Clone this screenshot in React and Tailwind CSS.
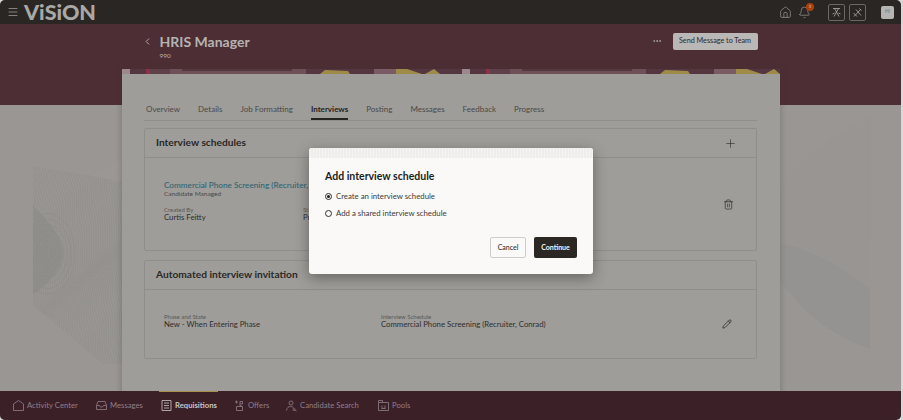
import { Bell, ChevronLeft, Ellipsis, House, Menu, Pencil, Plus, Trash2 } from "lucide-react";

// wavy contour lines for the page backdrop
function contourPath(x0, i) {
  let d = `M${x0} 140`;
  for (let y = 144; y <= 400; y += 4) {
    const x =
      x0 +
      Math.sin(y / 34 + i * 0.05) * 9 +
      Math.sin(y / 15 + i * 0.13) * 2.5 +
      Math.sin(y / 7 + i * 0.31) * 0.8;
    d += ` L${x.toFixed(1)} ${y}`;
  }
  return d;
}

function Backdrop() {
  const lines = Array.from({ length: 60 }, (_, i) => i);
  const rings = [5, 9, 13, 17, 21, 25, 29];
  return (
    <svg className="absolute inset-0 h-full w-full" viewBox="0 0 901 396">
      <defs>
        <clipPath id="leftTopo">
          <polygon points="0,154 60,163 122,176 122,367 75,367 0,303" />
        </clipPath>
      </defs>
      <polygon points="60,166 122,128 122,176" fill="#9b9794" />
      <path d="M0 196 Q30 225 33 245 Q32 270 0 292Z" fill="#918f8c" />
      <path d="M787 236 Q800 146 903 101 V367 H787Z" fill="#989593" />
      <path d="M783 233 Q840 236 903 286 V351 Q830 326 790 251Z" fill="#959391" />
      <path d="M790 251 Q830 326 903 351 V367 H783 V233Z" fill="#9a9693" />
      <g clipPath="url(#leftTopo)" fill="none" stroke="#8d8c89" strokeWidth="0.55">
        {lines.map((i) => (
          <path key={i} d={contourPath(i * 2.4 - 10, i)} />
        ))}
        {rings.map((r) => (
          <ellipse key={r} cx="16" cy="248" rx={r} ry={r * 1.5} />
        ))}
      </g>
    </svg>
  );
}

function BannerStrip() {
  return (
    <svg className="block h-[5px] w-full" viewBox="0 0 658 5" preserveAspectRatio="none">
      <defs>
        <pattern id="strip" x="0" y="0" width="340" height="5" patternUnits="userSpaceOnUse">
          <rect width="340" height="5" fill="#543640" />
          <rect x="0" width="8" height="5" fill="#9c888d" />
          <rect x="24" width="4" height="5" fill="#8d3349" />
          <rect x="28" width="20" height="5" fill="#5e404a" />
          <rect x="48" width="136" height="5" fill="#6f5058" />
          <rect x="60" width="110" height="2" fill="#52393f" />
          <polygon points="198,5 203,1 226,2 228,5" fill="#a08a47" />
          <rect x="252" width="22" height="5" fill="#7a5b64" />
          <polygon points="274,0 285,0 300,5 274,5" fill="#a08a47" />
          <polygon points="303,5 312,0 318,5" fill="#a08a47" />
        </pattern>
      </defs>
      <rect width="658" height="5" fill="url(#strip)" />
    </svg>
  );
}

function Field({ label, value, className = "" }) {
  return (
    <div className={className}>
      <div className="text-[6px] leading-[7px] text-[#5a5855]">{label}</div>
      <div className="text-[7.75px] leading-[9px] text-[#2f2d2b]">{value}</div>
    </div>
  );
}

function Card({ title, action, children, className = "" }) {
  return (
    <section className={`rounded-[2px] border border-[#8f8e8b] ${className}`}>
      <div className="flex h-[29px] items-center justify-between border-b border-[#8f8e8b] pl-[11px] pr-[19px]">
        <h2 className="text-[10.2px] font-bold text-[#2a2826]">{title}</h2>
        {action}
      </div>
      {children}
    </section>
  );
}

function NavIcon({ children }) {
  return (
    <svg width="13" height="13" viewBox="0 0 13 13" fill="none" stroke="currentColor" strokeWidth="0.8">
      {children}
    </svg>
  );
}

const tabs = ["Overview", "Details", "Job Formatting", "Interviews", "Posting", "Messages", "Feedback", "Progress"];

const navItems = [
  {
    label: "Activity Center",
    width: "w-[83px]",
    icon: <path d="M1.5 11.5V5L6.5 1.5 11.5 5v6.5Z" stroke="#8f7f92" />,
  },
  {
    label: "Messages",
    width: "w-[65px]",
    icon: <path d="M1.5 6.5 3 2.5h7l1.500 4v4h-10Zm0 0h3l1 1.500h2l1-1.500h3" />,
  },
  {
    label: "Requisitions",
    width: "w-[73px]",
    active: true,
    icon: <path d="M2 1.500h9v10H2Zm2 2.500h5M4 6.500h5M4 9h5" />,
  },
  {
    label: "Offers",
    width: "w-[52px]",
    icon: <path d="M2 3h3M3.500 1.500v3M7 2.500h2.500v2.500H7ZM3.500 7.500h6v4h-6ZM6 5.500l3 2" />,
  },
  {
    label: "Candidate Search",
    width: "w-[92px]",
    icon: <path d="M4 4a2 2 0 1 0 4 0a2 2 0 1 0-4 0ZM1.500 11.500c.5-3 2-4 4-4s2.500.5 3 1.500M8 10.500a1 1 0 1 0 2 0a1 1 0 1 0-2 0Zm2 .5 1.500 1" />,
  },
  {
    label: "Pools",
    width: "",
    icon: <path d="M1.500 3.500h10v8h-10Zm0 0V1.500h4v2M4.500 9.500h4M5 6.500v3M8 6.500v3" />,
  },
];

export default function App() {
  return (
    <div className="h-[420px] w-[903px] bg-[#d9d9d9]">
      <div className="relative flex h-[420px] w-[901px] flex-col overflow-hidden rounded-[5px] bg-[#9a9693] font-['Lato','Liberation_Sans',sans-serif]">
        <header className="z-10 flex h-6 shrink-0 items-center bg-[#2a2623] pl-[7px] pr-[7px]">
          <Menu size={12} strokeWidth={1.5} className="text-[#a3a2a0]" />
          <span className="ml-[5px] text-[21.500px] font-black leading-[24px] text-[#a9a8a6]">ViSiON</span>
          <div className="ml-auto flex items-center">
            <House size={13} strokeWidth={1.2} className="text-[#a3a2a0]" />
            <div className="relative ml-[6px]">
              <Bell size={13} strokeWidth={1.2} className="text-[#a3a2a0]" />
              <span className="absolute -right-[3px] -top-[3px] flex h-2 w-2 items-center justify-center rounded-full bg-[#a9410f] text-[4px] text-[#e8d5c8]">3</span>
            </div>
            <div className="ml-[17px] flex h-[17px] w-[17px] items-center justify-center rounded-[2px] border border-[#6a6764]">
              <svg width="11" height="11" viewBox="0 0 11 11" fill="none" stroke="#a3a2a0" strokeWidth="0.9">
                <path d="M2 1.500h7M3.500 1.500 8 9.500M7.500 1.500 3 9.500M1.500 7l2-1M9.500 7l-2-1" />
              </svg>
            </div>
            <div className="ml-[4px] flex h-[17px] w-[17px] items-center justify-center rounded-[2px] border border-[#6a6764]">
              <svg width="11" height="11" viewBox="0 0 11 11" fill="none" stroke="#a3a2a0" strokeWidth="0.9">
                <path d="M2 9.500 9 2M4 2.500l5 6M7.500 1.500l2 2M1.500 6l3.500 3.500" />
              </svg>
            </div>
            <div className="ml-[15px] flex h-[13px] w-[13px] items-center justify-center rounded-[2px] bg-[#b5b5b4] text-[5px] text-[#77777a]">HI</div>
          </div>
        </header>

        <main className="relative flex-1 overflow-hidden">
          <Backdrop />
          <div className="relative h-[81px] bg-[#4d2e34]">
            <div className="ml-[144.500px] flex w-[613px] items-start pt-[9px]">
              <ChevronLeft size={11} className="-ml-[3px] mt-[3px] text-[#b5b3b1]" />
              <div className="ml-[7px] flex-1">
                <h1 className="text-[14px] font-bold leading-[17px] text-[#b5b3b1]">HRIS Manager</h1>
                <div className="mt-[1px] text-[6.500px] leading-[9px] text-[#b5b3b1]">990</div>
              </div>
              <Ellipsis size={10} className="mr-[11px] mt-[3px] text-[#b5b3b1]" />
              <button className="h-[17px] w-[85px] rounded-[2px] bg-[#b9b8b6] text-[7.200px] font-medium text-[#333130]">Send Message to Team</button>
            </div>
          </div>

          <div className="relative -mt-[36px] ml-[122px] w-[658px] rounded-t-[3px] shadow-[0_0_6px_rgba(60,55,50,0.35)]">
            <BannerStrip />
            <div className="h-[400px] bg-[#9e9d9a] pl-[22px] pr-[23px] pt-[25px]">
              <nav className="flex gap-[18px] border-b border-[#8f8e8b] pl-[2px] text-[8px] text-[#4b4947]">
                {tabs.map((tab) => (
                  <span
                    key={tab}
                    className={`h-[21px] pt-[4px] ${tab === "Interviews" ? "border-b-2 border-[#262422] font-bold text-[#252321]" : ""}`}
                  >
                    {tab}
                  </span>
                ))}
              </nav>

              <Card
                title="Interview schedules"
                className="mt-[7px] h-[123px]"
                action={<Plus size={13} strokeWidth={1.1} className="text-[#272523]" />}
              >
                <div className="flex items-center pl-[19px] pr-[22px] pt-[22px]">
                  <div className="flex-1">
                    <div className="text-[8.200px] font-medium leading-[10px] text-[#2d6573]">Commercial Phone Screening (Recruiter, Conrad)</div>
                    <div className="text-[6.500px] leading-[8px] text-[#4b4947]">Candidate Managed</div>
                    <div className="mt-[8px] flex">
                      <Field label="Created By" value="Curtis Feitty" className="w-[139px]" />
                      <Field label="Status" value="Published" />
                    </div>
                  </div>
                  <Trash2 size={11} strokeWidth={1.400} className="mt-[6px] text-[#2a2826]" />
                </div>
              </Card>

              <Card title="Automated interview invitation" className="mt-[9px] h-[99px]">
                <div className="flex items-center pl-[19px] pr-[24px] pt-[23px]">
                  <Field label="Phase and State" value="New - When Entering Phase" className="w-[217px]" />
                  <Field label="Interview Schedule" value="Commercial Phone Screening (Recruiter, Conrad)" className="flex-1" />
                  <Pencil size={10} strokeWidth={1.800} className="mt-[6px] text-[#2a2826]" />
                </div>
              </Card>
            </div>
          </div>
        </main>

        <footer className="z-10 flex h-[29px] shrink-0 items-center bg-[#3b2027] pl-3">
          {navItems.map((item) => (
            <div
              key={item.label}
              className={`relative flex items-center gap-[2px] text-[7.700px] ${item.width} ${item.active ? "font-bold text-[#c8c6c7]" : "text-[#8f7f88]"}`}
            >
              {item.active && <span className="absolute -top-[8px] -left-[1px] h-[1px] w-[59px] bg-[#a88f4c]" />}
              <NavIcon>{item.icon}</NavIcon>
              <span className="whitespace-nowrap">{item.label}</span>
            </div>
          ))}
        </footer>

        <div className="absolute left-[309px] top-[148px] h-[126px] w-[284px] overflow-hidden rounded-[3px] bg-[#fbf9f8] shadow-[0_4px_14px_rgba(40,35,30,0.45)]">
          <div className="h-[10px] bg-[repeating-linear-gradient(90deg,#eceae8_0px,#f9f7f6_2px,#e6e4e2_3px)]" />
          <div className="px-4 pt-[12px]">
            <h2 className="text-[10.500px] font-bold leading-[13px] text-[#201e1c]">Add interview schedule</h2>
            <div className="mt-[8px] flex flex-col gap-[7px] text-[7.800px] leading-[10px] text-[#3b3937]">
              <label className="flex items-center gap-[4px]">
                <span className="flex h-[7px] w-[7px] items-center justify-center rounded-full border border-[#33312f]">
                  <span className="h-[3px] w-[3px] rounded-full bg-[#201e1c]" />
                </span>
                Create an interview schedule
              </label>
              <label className="flex items-center gap-[4px]">
                <span className="h-[7px] w-[7px] rounded-full border border-[#33312f]" />
                Add a shared interview schedule
              </label>
            </div>
            <div className="mt-[19px] flex justify-end gap-2">
              <button className="h-[21px] w-[36px] rounded-[2px] border border-[#cfcdcb] text-[7px] font-medium text-[#33312f]">Cancel</button>
              <button className="h-[21px] w-[43px] rounded-[2px] bg-[#2b2723] text-[7px] font-bold text-[#f5f3f1]">Continue</button>
            </div>
          </div>
        </div>
      </div>
    </div>
  );
}
